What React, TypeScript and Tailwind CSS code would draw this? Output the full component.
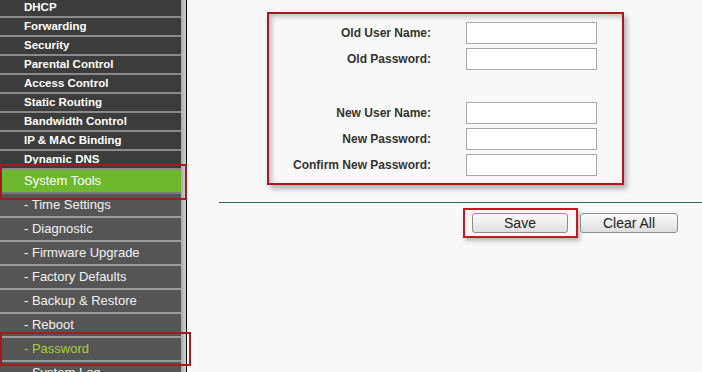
import React from 'react'

const TOP_ITEMS = [
  'DHCP',
  'Forwarding',
  'Security',
  'Parental Control',
  'Access Control',
  'Static Routing',
  'Bandwidth Control',
  'IP & MAC Binding',
  'Dynamic DNS',
]

const SUB_ITEMS = [
  'Time Settings',
  'Diagnostic',
  'Firmware Upgrade',
  'Factory Defaults',
  'Backup & Restore',
  'Reboot',
  'Password',
  'System Log',
]

const FIELDS_OLD = ['Old User Name:', 'Old Password:']
const FIELDS_NEW = ['New User Name:', 'New Password:', 'Confirm New Password:']

function Field({ label }: { label: string }) {
  return (
    <div className="flex items-center h-[22px]">
      <label className="w-[162px] text-right text-[12px] font-bold text-[#333]">{label}</label>
      <input
        type="text"
        className="ml-[35px] w-[131px] h-[22px] bg-white border border-[#a8a8a8] outline-none"
      />
    </div>
  )
}

function Sidebar() {
  return (
    <div className="relative flex shrink-0 h-full">
      <div className="w-[181px] -mt-[1px] flex flex-col">
        {TOP_ITEMS.map(item => (
          <div
            key={item}
            className="h-[19px] shrink-0 flex items-center pl-[24px] bg-[#3c3c3c] border-b-2 border-[#8a8a8a] text-[11.5px] font-bold text-white"
          >
            {item}
          </div>
        ))}
        <div className="h-[24px] shrink-0 flex items-center pl-[24px] bg-[#6db82d] border-b-[2px] border-[#7a7a7a] text-[13px] text-white">
          System Tools
        </div>
        {SUB_ITEMS.map(item => (
          <div
            key={item}
            className={
              'h-[24px] shrink-0 flex items-center pl-[24px] bg-[#555555] border-b-2 border-[#9a9a9a] text-[13px] ' +
              (item === 'Password' ? 'text-[#a6d23a]' : 'text-[#f2f2f2]')
            }
          >
            - {item}
          </div>
        ))}
      </div>
      <div className="w-[5px] bg-gradient-to-r from-[#a9a9a9] to-[#d2d2d2]" />
      <div className="w-[1px] bg-black" />

      {/* annotation boxes */}
      <div className="absolute left-0 top-[164px] w-[187px] h-[36px] border-2 border-[#a51a1f]" />
      <div className="absolute left-0 top-[332px] w-[191px] h-[34px] border-2 border-[#a51a1f]" />
    </div>
  )
}

export default function App() {
  return (
    <div
      className="w-[702px] h-[372px] overflow-hidden flex bg-[#f8f8f8]"
      style={{ fontFamily: '"Liberation Sans", Arial, sans-serif' }}
    >
      <Sidebar />

      <div className="flex-1 flex flex-col">
        <div className="ml-[80px] mt-[12px] w-[357px] h-[173px] border-2 border-[#b0141c] shadow-[3px_4px_5px_rgba(0,0,0,0.28),inset_3px_3px_5px_rgba(0,0,0,0.22)] pt-[8px] flex flex-col gap-[4px]">
          {FIELDS_OLD.map(f => <Field key={f} label={f} />)}
          <div className="h-[24px]" />
          {FIELDS_NEW.map(f => <Field key={f} label={f} />)}
        </div>

        <div className="ml-[32px] mt-[17px] h-[1px] bg-[#226e54]" />

        <div className="flex items-start mt-[5px] ml-[276px] gap-[2px]">
          <div className="pl-[7px] pr-[8px] pt-[3px] pb-[3px] border-2 border-[#cc1420] shadow-[2px_3px_4px_rgba(0,0,0,0.25)] flex">
            <button className="w-[96px] h-[20px] rounded-[3px] border border-[#8e8e8e] bg-gradient-to-b from-[#fbfbfb] to-[#dedede] text-[14px] text-[#222] leading-none">
              Save
            </button>
          </div>
          <button className="mt-[5px] w-[98px] h-[20px] rounded-[3px] border border-[#8e8e8e] bg-gradient-to-b from-[#fbfbfb] to-[#dedede] text-[14px] text-[#222] leading-none">
            Clear All
          </button>
        </div>
      </div>
    </div>
  )
}
